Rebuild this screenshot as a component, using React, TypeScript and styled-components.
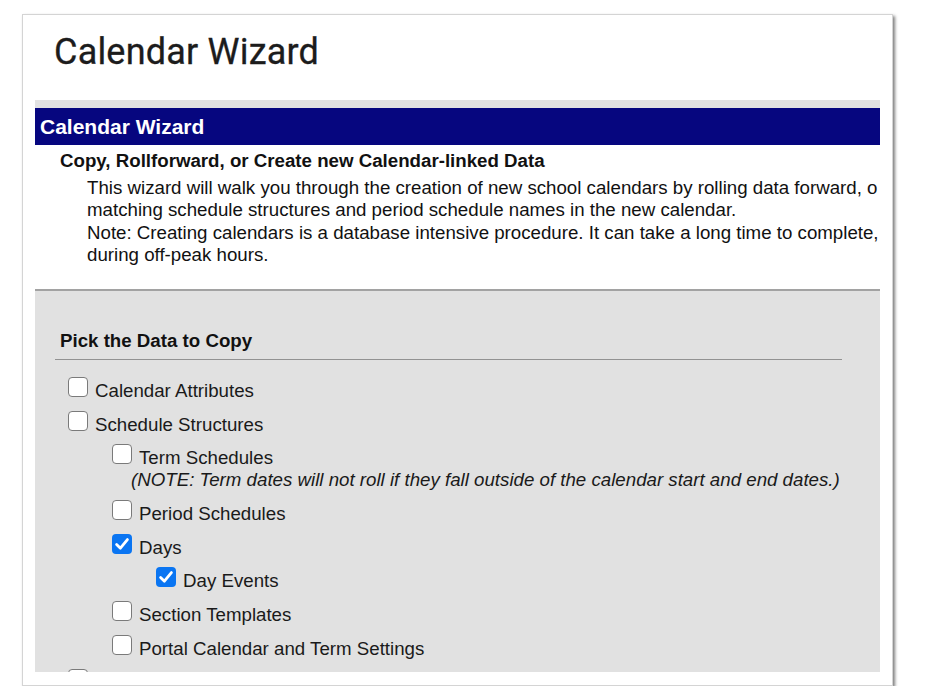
import { FC } from 'react';
import styled, { createGlobalStyle } from 'styled-components';

const GlobalStyle = createGlobalStyle`
  html, body {
    margin: 0;
    padding: 0;
    background: #ffffff;
  }

  body {
    font-family: 'Liberation Sans', Arial, sans-serif;
    color: #111;
  }
`;

type Item = {
  label?: string;
  level: number;
  checked?: boolean;
  note?: string;
};

const items: Item[] = [
  { label: 'Calendar Attributes', level: 0 },
  { label: 'Schedule Structures', level: 0 },
  {
    label: 'Term Schedules',
    level: 1,
    note: '(NOTE: Term dates will not roll if they fall outside of the calendar start and end dates.)',
  },
  { label: 'Period Schedules', level: 1 },
  { label: 'Days', level: 1, checked: true },
  { label: 'Day Events', level: 2, checked: true },
  { label: 'Section Templates', level: 1 },
  { label: 'Portal Calendar and Term Settings', level: 1 },
  { level: 0 },
];

const CheckBox: FC<{ checked?: boolean }> = ({ checked }) => (
  <Box $checked={checked}>
    {checked && (
      <svg viewBox="0 0 20 20" width="20" height="20">
        <path
          d="M4.6 10.4 L8.4 14.2 L15.4 5.6"
          fill="none"
          stroke="#fff"
          strokeWidth="2.8"
          strokeLinecap="round"
          strokeLinejoin="round"
        />
      </svg>
    )}
  </Box>
);

const App: FC = () => {
  return (
    <Page>
      <GlobalStyle />
      <Card>
        <PageTitle>Calendar Wizard</PageTitle>
        <Frame>
          <TopStrip />
          <HeaderBar>Calendar Wizard</HeaderBar>
          <Intro>
            <IntroTitle>Copy, Rollforward, or Create new Calendar-linked Data</IntroTitle>
            <IntroText>
              <p>
                This wizard will walk you through the creation of new school calendars by rolling
                data forward, o
              </p>
              <p>matching schedule structures and period schedule names in the new calendar.</p>
              <p>
                Note: Creating calendars is a database intensive procedure. It can take a long
                time to complete,
              </p>
              <p>during off-peak hours.</p>
            </IntroText>
          </Intro>
          <Section>
            <SectionTitle>Pick the Data to Copy</SectionTitle>
            <List>
              {items.map((item, i) => (
                <Row key={i} $level={item.level}>
                  <Line>
                    <CheckBox checked={item.checked} />
                    {item.label && <Label>{item.label}</Label>}
                  </Line>
                  {item.note && <Note>{item.note}</Note>}
                </Row>
              ))}
            </List>
          </Section>
        </Frame>
      </Card>
    </Page>
  );
};

const Page = styled.div`
  padding: 14px 0 0 22px;
`;

const Card = styled.div`
  width: 871px;
  height: 672px;
  box-sizing: border-box;
  border: 1px solid #d4d4d4;
  box-shadow: 2px 2px 3px rgba(0, 0, 0, 0.5);
  padding: 0 12px 12px;
  background: #fff;
  overflow: hidden;
`;

const PageTitle = styled.h1`
  margin: 0;
  height: 85px;
  box-sizing: border-box;
  padding: 17px 0 0 19px;
  font-family: Roboto, 'Liberation Sans', sans-serif;
  font-weight: 400;
  font-size: 36px;
  line-height: 40px;
  color: #1c1c1c;
  letter-spacing: 0.2px;
  -webkit-text-stroke: 0.3px #1c1c1c;
`;

const Frame = styled.div`
  width: 845px;
`;

const TopStrip = styled.div`
  height: 8px;
  background: #e2e2e2;
`;

const HeaderBar = styled.div`
  height: 37px;
  display: flex;
  align-items: center;
  padding-left: 5px;
  background: #06067f;
  color: #fff;
  font-weight: 700;
  font-size: 21px;
`;

const Intro = styled.div`
  height: 144px;
  box-sizing: border-box;
  padding: 5px 0 0 25px;
  overflow: hidden;
  white-space: nowrap;
`;

const IntroTitle = styled.div`
  font-weight: 700;
  font-size: 18.7px;
  line-height: 22px;
`;

const IntroText = styled.div`
  margin-top: 5px;
  padding-left: 27px;
  font-size: 18.7px;
  line-height: 22.3px;

  p {
    margin: 0;
  }
`;

const Section = styled.div`
  height: 383px;
  box-sizing: border-box;
  border-top: 2px solid #a2a2a2;
  background: #e1e1e1;
  overflow: hidden;
`;

const SectionTitle = styled.div`
  margin: 39px 38px 0 20px;
  padding: 0 0 7px 5px;
  border-bottom: 1px solid #929292;
  font-weight: 700;
  font-size: 18.7px;
  line-height: 22px;
`;

const List = styled.div`
  padding-top: 14px;
`;

const Row = styled.div<{ $level: number }>`
  padding: 6px 0 5.7px ${({ $level }) => 33 + $level * 44}px;
`;

const Line = styled.div`
  display: flex;
  align-items: flex-start;
  gap: 7px;
`;

const Box = styled.span<{ $checked?: boolean }>`
  flex: none;
  width: 20px;
  height: 20px;
  margin-top: -3px;
  box-sizing: border-box;
  border-radius: 4px;
  border: ${({ $checked }) => ($checked ? 'none' : '1.5px solid #7a7a7a')};
  background: ${({ $checked }) => ($checked ? '#0a75f2' : '#fff')};
  display: grid;
  place-items: center;

  svg {
    display: block;
  }
`;

const Label = styled.span`
  font-size: 18.7px;
  line-height: 22px;
  color: #1a1a1a;
`;

const Note = styled.div`
  margin-left: 19px;
  font-style: italic;
  font-size: 18.7px;
  line-height: 22px;
  color: #1a1a1a;
  white-space: nowrap;
`;

export default App;
